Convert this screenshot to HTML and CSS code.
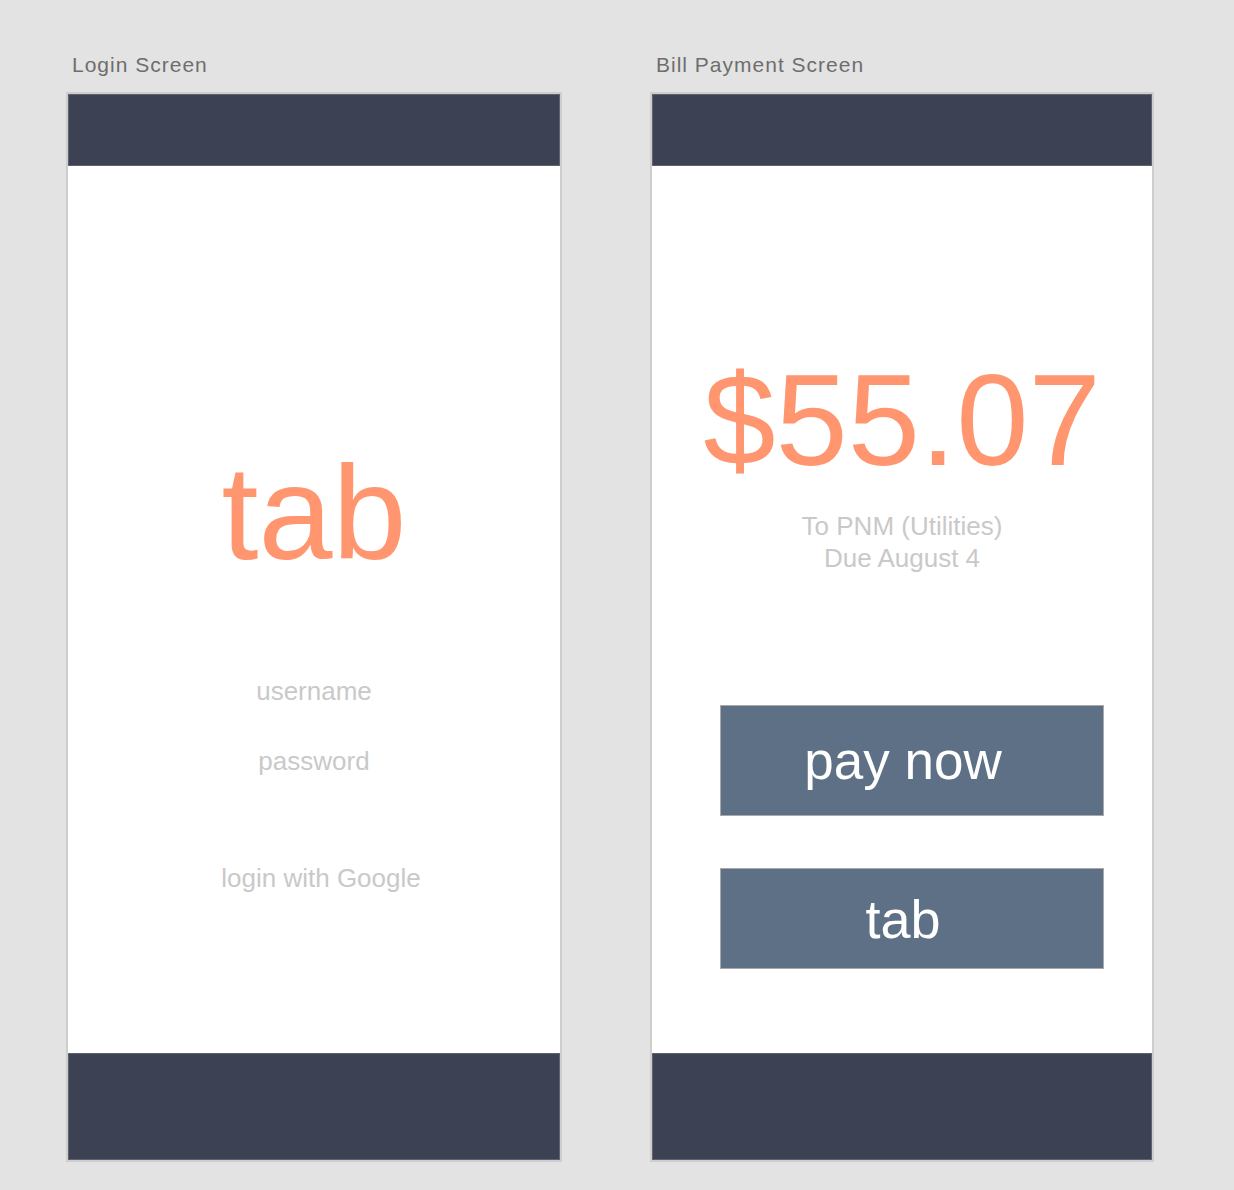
FILE: index.html
```html
<!DOCTYPE html>
<html lang="en">
<head>
    <meta charset="UTF-8">
    <meta name="viewport" content="width=device-width, initial-scale=1.0">
    <title>tab - Screens</title>
    <link rel="stylesheet" href="styles.css">
</head>
<body>
    <div class="board">
        <div class="artboard">
            <div class="artboard-label">Login Screen</div>
            <div class="screen login">
                <div class="bar top"></div>
                <div class="content">
                    <div class="logo">tab</div>
                    <div class="field username">username</div>
                    <div class="field password">password</div>
                    <div class="field google">login with Google</div>
                </div>
                <div class="bar bottom"></div>
            </div>
        </div>

        <div class="artboard">
            <div class="artboard-label">Bill Payment Screen</div>
            <div class="screen payment">
                <div class="bar top"></div>
                <div class="content">
                    <div class="amount">$55.07</div>
                    <div class="bill-info">
                        <div>To PNM (Utilities)</div>
                        <div>Due August 4</div>
                    </div>
                    <button class="action pay">pay now</button>
                    <button class="action tab-btn">tab</button>
                </div>
                <div class="bar bottom"></div>
            </div>
        </div>
    </div>
</body>
</html>
```

FILE: styles.css
```css
* {
    margin: 0;
    padding: 0;
    box-sizing: border-box;
    font-family: 'Liberation Sans', Arial, Helvetica, sans-serif;
}

body {
    background: #e3e3e3;
    min-height: 100vh;
}

.board {
    display: flex;
    gap: 88px;
    padding: 53px 0 0 66px;
}

.artboard-label {
    font-size: 21px;
    line-height: 24px;
    letter-spacing: 1px;
    color: #6e6e6e;
    padding-left: 6px;
    margin-bottom: 15px;
}

.screen {
    display: flex;
    flex-direction: column;
    height: 1070px;
    background: #fff;
    border: 2px solid #cecece;
}

.screen.login {
    width: 496px;
}

.screen.payment {
    width: 504px;
}

.bar {
    background: #3c4254;
    border: 1px solid #5f636d;
}

.bar.top {
    height: 72px;
}

.bar.bottom {
    height: 107px;
}

.content {
    flex: 1;
    display: flex;
    flex-direction: column;
    align-items: center;
}

/* login */
.logo {
    font-size: 133px;
    line-height: 133px;
    color: #ff966f;
    margin-top: 281px;
}

.field {
    font-size: 26px;
    line-height: 30px;
    color: #c9c9c9;
}

.username {
    margin-top: 96px;
}

.password {
    margin-top: 40px;
}

.google {
    margin-top: 87px;
    padding-left: 14px;
}

/* payment */
.amount {
    font-size: 130px;
    line-height: 130px;
    color: #ff966f;
    margin-top: 189px;
}

.bill-info {
    margin-top: 25px;
    font-size: 26px;
    line-height: 32px;
    color: #c9c9c9;
    text-align: center;
}

.action {
    display: flex;
    align-items: center;
    justify-content: center;
    width: 384px;
    margin-left: 20px;
    padding-right: 18px;
    background: #5e7085;
    border: 1px solid #a9a9a9;
    color: #fff;
    font-size: 53px;
    line-height: 1;
}

.pay {
    height: 111px;
    margin-top: 131px;
}

.tab-btn {
    height: 101px;
    margin-top: 52px;
    font-size: 54px;
}
```
